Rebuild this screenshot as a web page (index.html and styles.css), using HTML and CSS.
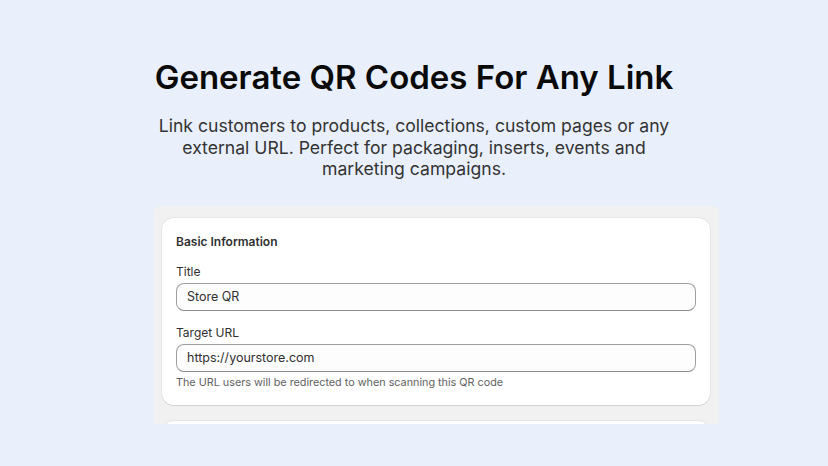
FILE: index.html
```html
<!DOCTYPE html>
<html>
<head>
<meta charset="utf-8">
<link rel="stylesheet" href="styles.css">
</head>
<body>
<main class="page">
  <h1 class="title">Generate QR Codes For Any Link</h1>
  <p class="subtitle">Link customers to products, collections, custom pages or any external URL. Perfect for packaging, inserts, events and marketing campaigns.</p>
  <section class="panel">
    <div class="card">
      <h2 class="card-title">Basic Information</h2>
      <div class="field">
        <label class="label">Title</label>
        <div class="input">Store QR</div>
      </div>
      <div class="field">
        <label class="label">Target URL</label>
        <div class="input">https://yourstore.com</div>
        <div class="help">The URL users will be redirected to when scanning this QR code</div>
      </div>
    </div>
    <div class="card card-next"></div>
  </section>
</main>
</body>
</html>
```
FILE: styles.css
```css
html, body {
  margin: 0;
  padding: 0;
  background: #e9f0fc;
  height: 100%;
  overflow: hidden;
}
.page {
  display: flex;
  flex-direction: column;
  align-items: center;
  font-family: Inter, "Noto Sans", sans-serif;
  padding-top: 58px;
}
.title {
  margin: 0;
  font-size: 33px;
  line-height: 38px;
  font-weight: 600;
  color: #0a0a0a;
}
.subtitle {
  margin: 19px 0 0;
  width: 540px;
  text-align: center;
  font-size: 17.6px;
  line-height: 21.5px;
  color: #333;
}
.panel {
  margin-top: 26px;
  margin-left: 45px;
  width: 565px;
  height: 218px;
  box-sizing: border-box;
  padding: 12px 9px 0 8px;
  background: #f1f1f1;
  border-radius: 6px 6px 0 0;
  overflow: hidden;
  display: flex;
  flex-direction: column;
  gap: 16px;
}
.card {
  background: #fff;
  border-radius: 12px;
  box-shadow: 0 1px 0 #d4d4d4, 0 0 0 1px #e6e6e6;
  padding: 16px 14px 15px;
  flex-shrink: 0;
}
.card-next {
  height: 40px;
  padding: 0;
}
.card-title {
  margin: 0 0 14px;
  font-size: 12px;
  line-height: 16px;
  font-weight: 600;
  color: #303030;
}
.field {
  display: flex;
  flex-direction: column;
}
.field + .field {
  margin-top: 14px;
}
.label {
  font-size: 12px;
  line-height: 16px;
  color: #303030;
  margin-bottom: 3px;
}
.input {
  box-sizing: border-box;
  height: 28px;
  border: 1px solid #8a8a8a;
  border-color: #a0a0a0 #a0a0a0 #8a8a8a;
  border-radius: 8px;
  background: #fdfdfd;
  padding: 0 10px;
  display: flex;
  align-items: center;
  font-size: 12.5px;
  color: #303030;
}
.help {
  margin-top: 4px;
  font-size: 10.8px;
  line-height: 14px;
  color: #616161;
}
```
